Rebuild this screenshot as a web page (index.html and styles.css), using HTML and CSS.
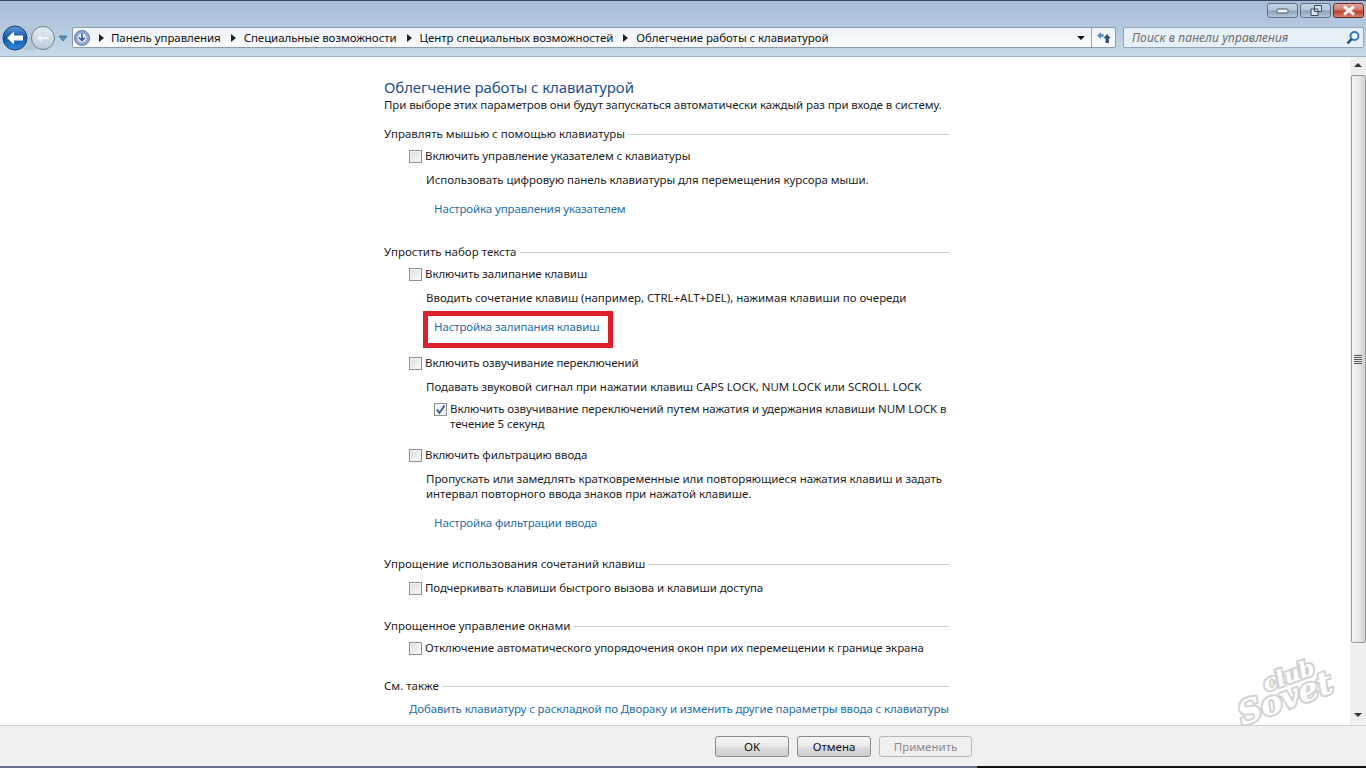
FILE: index.html
```html
<!DOCTYPE html>
<html lang="ru">
<head>
<meta charset="utf-8">
<title>Облегчение работы с клавиатурой</title>
<link rel="stylesheet" href="styles.css">
</head>
<body>
<div class="window">
  <header class="chrome">
    <div class="titlebar">
      <button class="wbtn"><svg width="14" height="8" viewBox="0 0 14 8"><rect x="1" y="2" width="11" height="4" rx="1" fill="#f4f7fa" stroke="#47566a"/></svg></button>
      <button class="wbtn"><svg width="14" height="13" viewBox="0 0 14 13"><path d="M5.500 1.500h7v6h-7z M2 5h7v6.500H2z" fill="#d8e3ee" stroke="#39485a"/></svg></button>
      <button class="wbtn close"><svg width="16" height="11" viewBox="0 0 16 11"><path d="M3 1.500 13 9.500M13 1.500 3 9.500" stroke="#f6f0ee" stroke-width="3"/></svg></button>
    </div>
    <div class="navbar">
      <div class="history">
        <svg width="70" height="30" viewBox="0 0 70 30">
          <defs>
            <linearGradient id="bk" x1="0" y1="0" x2="0" y2="1"><stop offset="0" stop-color="#5f9cd8"/><stop offset=".5" stop-color="#1256a8"/><stop offset="1" stop-color="#2f8fdc"/></linearGradient>
            <linearGradient id="fw" x1="0" y1="0" x2="0" y2="1"><stop offset="0" stop-color="#e6ecf2"/><stop offset="1" stop-color="#bccbd8"/></linearGradient>
          </defs>
          <rect x="14" y="3" width="30" height="24" rx="12" fill="#b4c6d6"/>
          <circle cx="43" cy="15" r="11.500" fill="url(#fw)" stroke="#6f7f8e"/>
          <path d="M36 15l5.500-5v3.200h7.500v3.600h-7.500v3.200z" fill="#edf1f5" stroke="#c4ced8" stroke-width=".6"/>
          <circle cx="15" cy="15" r="12" fill="url(#bk)" stroke="#1b3f6c"/>
          <path d="M7 15l7-6.500v4h9v5h-9v4z" fill="#fff"/>
          <path d="M59 13h8l-4 5z" fill="#5d93bf" stroke="#2f5a80" stroke-width=".7"/>
        </svg>
      </div>
      <div class="address">
        <svg class="home" width="18" height="18" viewBox="0 0 18 18">
          <circle cx="9" cy="9" r="7.500" fill="#8ea7d4" stroke="#66799c"/>
          <circle cx="9" cy="9" r="4.500" fill="#e6edf6"/>
          <path d="M9 4.500v6M6 8.500l3 3 3-3" stroke="#35599c" stroke-width="1.600" fill="none"/>
        </svg>
        <ol class="crumbs">
          <li>Панель управления</li>
          <li>Специальные возможности</li>
          <li>Центр специальных возможностей</li>
          <li>Облегчение работы с клавиатурой</li>
        </ol>
        <span class="drop"></span>
        <span class="refresh"><svg width="14" height="11" viewBox="0 0 14 11"><path d="M0 3.500 4 0v2h2.500v3H4v2z" fill="#5f8fbc"/><path d="M10 2l3.800 4.200H12V11H8.500V6.200H6.200z" fill="#33557a"/></svg></span>
      </div>
      <div class="search">
        <span class="hint">Поиск в панели управления</span>
        <svg width="16" height="16" viewBox="0 0 16 16"><circle cx="9.500" cy="6" r="4" fill="#eef4fa" stroke="#3a78b8" stroke-width="2"/><path d="M6.500 9 2.500 13.500" stroke="#24507f" stroke-width="2.600"/></svg>
      </div>
    </div>
  </header>

  <main class="main">
    <div class="content">
      <h1 class="title">Облегчение работы с клавиатурой</h1>
      <p class="lead">При выборе этих параметров они будут запускаться автоматически каждый раз при входе в систему.</p>

      <h2 class="sect s1">Управлять мышью с помощью клавиатуры</h2>
      <label class="check"><span class="box"></span>Включить управление указателем с клавиатуры</label>
      <p class="desc">Использовать цифровую панель клавиатуры для перемещения курсора мыши.</p>
      <a class="link">Настройка управления указателем</a>

      <h2 class="sect s2">Упростить набор текста</h2>
      <label class="check"><span class="box"></span>Включить залипание клавиш</label>
      <p class="desc">Вводить сочетание клавиш (например, CTRL+ALT+DEL), нажимая клавиши по очереди</p>
      <a class="link marked">Настройка залипания клавиш</a>
      <label class="check gap20"><span class="box"></span>Включить озвучивание переключений</label>
      <p class="desc">Подавать звуковой сигнал при нажатии клавиш CAPS LOCK, NUM LOCK или SCROLL LOCK</p>
      <label class="check nested"><span class="box on"><svg width="11" height="11" viewBox="0 0 11 11"><path d="M2 5.500 4.500 9 9.500 1.500" fill="none" stroke="#3f5a8c" stroke-width="1.800"/></svg></span><span>Включить озвучивание переключений путем нажатия и удержания клавиши NUM LOCK в течение 5 секунд</span></label>
      <label class="check gap15"><span class="box"></span>Включить фильтрацию ввода</label>
      <p class="desc">Пропускать или замедлять кратковременные или повторяющиеся нажатия клавиш и задать интервал повторного ввода знаков при нажатой клавише.</p>
      <a class="link after-two">Настройка фильтрации ввода</a>

      <h2 class="sect s3">Упрощение использования сочетаний клавиш</h2>
      <label class="check g8"><span class="box"></span>Подчеркивать клавиши быстрого вызова и клавиши доступа</label>
      <h2 class="sect s4">Упрощенное управление окнами</h2>
      <label class="check"><span class="box"></span>Отключение автоматического упорядочения окон при их перемещении к границе экрана</label>
      <h2 class="sect s4">См. также</h2>
      <a class="link also">Добавить клавиатуру с раскладкой по Двораку и изменить другие параметры ввода с клавиатуры</a>
    </div>
    <div class="scrollbar">
      <span class="arrow up"></span>
      <span class="thumb"><span class="grip"></span></span>
      <span class="arrow down"></span>
    </div>
    <div class="watermark"><span class="wm-club">club</span><span class="wm-sovet">Sovet</span></div>
  </main>

  <footer class="footer">
    <button class="btn">OK</button>
    <button class="btn">Отмена</button>
    <button class="btn off">Применить</button>
  </footer>
  <div class="taskedge"><span class="edge-a"></span><span class="edge-b"></span></div>
</div>
</body>
</html>
```

FILE: styles.css
```css
*, *::before, *::after { box-sizing: border-box; }
html, body { margin: 0; height: 100%; overflow: hidden; background: #fff; }
body { font: 11.5px/16px "Noto Sans", "Open Sans", sans-serif; letter-spacing: -0.07px; color: #1e1e1e; }
.window { display: flex; flex-direction: column; height: 768px; width: 1366px; }

.chrome {
  height: 57px;
  flex: none;
  background: linear-gradient(#a6bdd5 0, #b4c9de 24px, #c7daeb 56px);
  border-top: 1px solid #3b4a60;
  border-bottom: 1px solid #a3b2c2;
}
.titlebar { height: 22px; display: flex; justify-content: flex-end; gap: 2px; padding: 2px 2px 0 0; }
.wbtn {
  width: 31px; height: 15px; padding: 0;
  display: flex; align-items: center; justify-content: center;
  border: 1px solid #5f7186; border-radius: 3px;
  background: linear-gradient(#c3d4e4 0, #b5c8da 45%, #8ea3b8 55%, #b4c7d9 100%);
}
.wbtn.close {
  border-color: #6a2a2a;
  background: linear-gradient(#dfa79e 0, #cc7a6e 45%, #c03d2f 55%, #d4806c 100%);
}
.navbar { height: 33px; display: flex; align-items: flex-start; padding-top: 4px; }
.history { width: 72px; flex: none; height: 30px; margin-top: -4px; }
.address {
  width: 1044px; height: 21px; flex: none;
  display: flex; align-items: center;
  background: linear-gradient(#eef3f8, #fbfcfe);
  border: 1px solid #8a9bad; border-radius: 2px;
  margin-right: 7px;
  color: #111;
}
.home { flex: none; }
.crumbs { list-style: none; display: flex; margin: 0; padding: 1px 0 0; flex: 1; }
.crumbs li { display: flex; align-items: center; padding-left: 28px; margin-right: -5px; white-space: nowrap; position: relative; }
.crumbs li:first-child { padding-left: 20px; }
.crumbs li::before {
  content: ""; position: absolute; left: 15px; top: 4px;
  border-left: 5px solid #222; border-top: 4px solid transparent; border-bottom: 4px solid transparent;
}
.crumbs li:first-child::before { left: 8px; }
.drop {
  width: 0; height: 0; flex: none; margin-right: 6px;
  border-top: 4px solid #111; border-left: 4px solid transparent; border-right: 4px solid transparent;
}
.refresh { width: 24px; height: 19px; flex: none; display: flex; align-items: center; justify-content: center; border-left: 1px solid #9aaaba; }
.search {
  width: 241px; height: 21px; flex: none;
  display: flex; align-items: center; justify-content: space-between;
  background: #e7eff7;
  border: 1px solid #93a4b6; border-radius: 2px;
  padding: 1px 2px 0 8px;
}
.hint { font-size: 12px; letter-spacing: 0.1px; font-style: italic; color: #6d6d6d; }

.main { flex: 1; display: flex; position: relative; min-height: 0; background: #fff; }
.content { flex: 1; padding: 20px 0 0 384px; }
.title { margin: 0; width: 260px; font-size: 15px; letter-spacing: -0.12px; font-weight: 400; line-height: 20px; color: #1d4f8c; white-space: nowrap; }
.lead { margin: 0; width: 570px; letter-spacing: -0.09px; white-space: nowrap; }
.sect {
  margin: 0; width: 565px; height: 16px;
  display: flex; align-items: center; gap: 3px;
  font-size: inherit; font-weight: 400; letter-spacing: 0; white-space: nowrap;
}
.sect::after { content: ""; flex: 1; height: 1px; background: #cfcfcf; }
.s1 { margin-top: 13px; }
.s2 { margin-top: 27px; }
.s3 { margin-top: 25px; }
.s4 { margin-top: 22px; }
.check { display: flex; align-items: center; gap: 3px; margin: 6px 0 0 25px; height: 16px; white-space: nowrap; }
.g8 { margin-top: 8px; }
.gap20 { margin-top: 20px; }
.gap15 { margin-top: 15px; }
.box {
  width: 13px; height: 13px; flex: none;
  border: 1px solid #8e8f8f;
  background: linear-gradient(135deg, #dcdcdc, #eeeeee 60%, #f8f8f8);
  box-shadow: inset 0 0 0 1px #f4f4f4;
  display: flex; align-items: center; justify-content: center;
}
.box.on { background: #eef1f6; }
.nested { margin: 6px 0 0 50px; width: 515px; height: 31px; white-space: normal; align-items: flex-start; line-height: 15px; }
.nested .box { margin-top: 2px; }
.desc { margin: 8px 0 0 42px; width: 523px; letter-spacing: -0.04px; line-height: 15px; min-height: 16px; }
.link { display: block; width: max-content; margin: 13px 0 0 50px; color: #1f6ea6; letter-spacing: -0.12px; line-height: 16px; white-space: nowrap; }
.after-two { margin-top: 14px; }
.also { margin: 7px 0 0 25px; }
.marked { position: relative; }
.marked::after {
  content: ""; position: absolute; left: -11px; top: -8px;
  width: 190px; height: 37px;
  border: 5px solid #e01f2d;
}

.scrollbar { width: 16px; flex: none; position: relative; background: #efefef; display: flex; flex-direction: column; align-items: center; }
.arrow { width: 0; height: 0; flex: none; border-left: 4px solid transparent; border-right: 4px solid transparent; }
.up { border-bottom: 4px solid #333; margin-top: 6px; }
.down { border-top: 4px solid #333; margin-top: 70px; }
.thumb {
  width: 15px; height: 568px; margin-top: 8px; flex: none;
  border: 1px solid #9b9b9b; border-radius: 2px;
  background: linear-gradient(90deg, #f4f4f4, #e4e4e4 60%, #cfcfcf);
  display: flex; align-items: center; justify-content: center;
}
.grip { width: 8px; height: 9px; background: repeating-linear-gradient(#555 0 1px, #eee 1px 2px); }

.watermark { position: absolute; left: 1236px; top: 600px; width: 100px; height: 72px; pointer-events: none; z-index: 2; }
.wm-club, .wm-sovet {
  position: absolute; font-family: "DejaVu Serif", serif; font-style: italic; font-weight: 700;
  letter-spacing: 0; color: #fff; -webkit-text-stroke: 4px #d2d2d2; paint-order: stroke fill;
  transform: rotate(-20deg); white-space: nowrap;
}
.wm-club { left: 26px; top: 6px; font-size: 22px; line-height: 24px; }
.wm-sovet { left: 0; top: 22px; font-size: 32px; line-height: 38px; }

.footer {
  height: 41px; flex: none;
  display: flex; justify-content: flex-end; align-items: flex-start; gap: 8px;
  padding: 10px 394px 0 0;
  background: #f0f0f0;
  border-top: 1px solid #d0d0d0;
}
.btn {
  width: 74px; height: 21px; padding: 0;
  font: inherit; color: #111;
  border: 1px solid #8a8a8a; border-radius: 3px;
  background: linear-gradient(#f6f6f6 0, #ebebeb 48%, #dcdcdc 52%, #cfcfcf 100%);
}
.btn.off { width: 93px; color: #8a8a8a; border-color: #b8b8b8; background: #f0f0f0; }
.taskedge { height: 2px; flex: none; display: flex; }
.edge-a { width: 977px; background: #5f7288; }
.edge-b { flex: 1; background: #111; }
```
